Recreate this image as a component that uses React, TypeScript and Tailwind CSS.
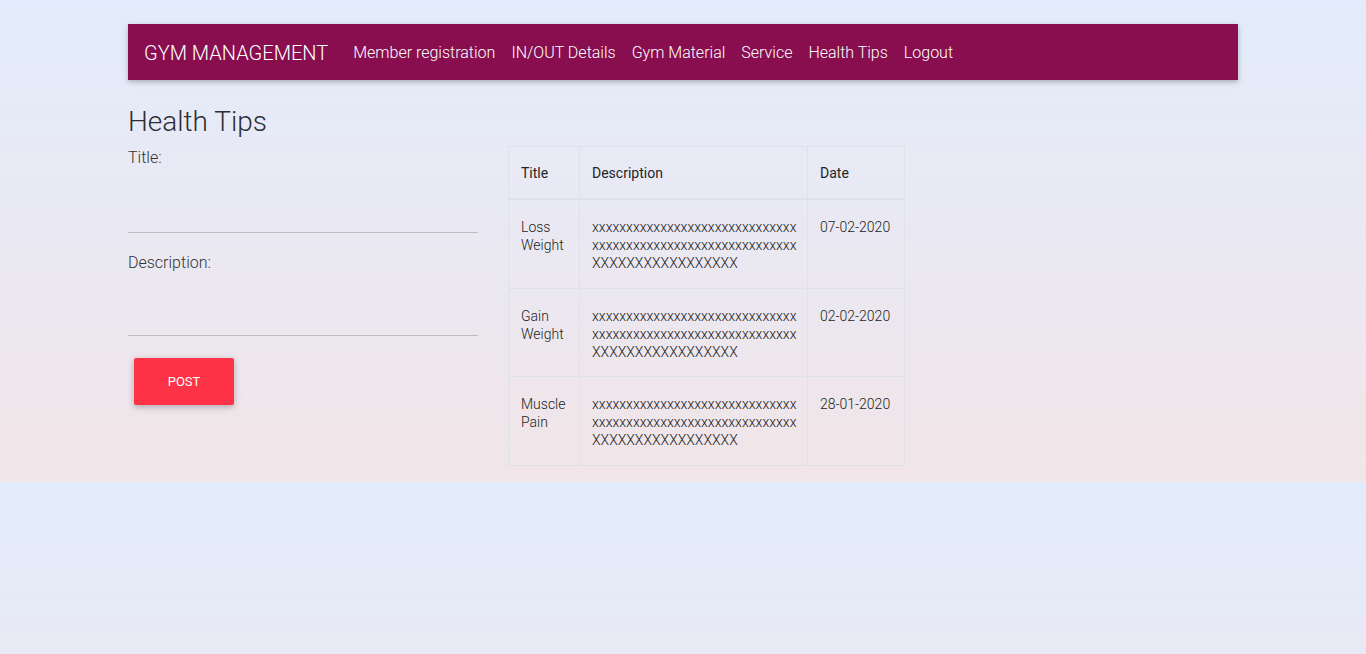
import React from "react";

const links = [
  "Member registration",
  "IN/OUT Details",
  "Gym Material",
  "Service",
  "Health Tips",
  "Logout",
];

const lower = "x".repeat(30);
const upper = "X".repeat(17);

const tips = [
  { title: ["Loss", "Weight"], date: "07-02-2020" },
  { title: ["Gain", "Weight"], date: "02-02-2020" },
  { title: ["Muscle", "Pain"], date: "28-01-2020" },
];

const Navbar = () => (
  <nav className="h-14 bg-[#880e4f] flex items-center px-4 pt-[2px] shadow-[0_2px_4px_rgba(0,0,0,0.16),0_2px_8px_rgba(0,0,0,0.12)]">
    <span className="text-[20px] font-light text-white mr-[17px]">GYM MANAGEMENT</span>
    <ul className="flex items-center">
      {links.map((item) => (
        <li key={item} className="px-2 text-[16px] font-light text-white">
          {item}
        </li>
      ))}
    </ul>
  </nav>
);

const Form = () => (
  <div className="w-[350px]">
    {/* Title */}
    <label className="block text-[16px] leading-6 font-light text-[#333]">Title:</label>
    <div className="h-[63px] border-b border-[#bdbdbd]" />
    {/* Description */}
    <label className="block mt-[18px] text-[16px] leading-6 font-light text-[#333]">
      Description:
    </label>
    <div className="h-[61px] border-b border-[#bdbdbd]" />
    {/* Action */}
    <button className="mt-[22px] ml-[6px] w-[100px] h-[47px] rounded-[2px] bg-[#ff3347] text-white text-[13px] uppercase shadow-[0_2px_5px_rgba(0,0,0,0.16),0_2px_10px_rgba(0,0,0,0.12)]">
      Post
    </button>
  </div>
);

const TipsTable = () => (
  <table className="w-[397px] shrink-0 border-collapse table-fixed text-[14px] leading-[18px]">
    <colgroup>
      <col className="w-[71px]" />
      <col className="w-[228px]" />
      <col />
    </colgroup>
    <thead>
      <tr className="border-b-2 border-[#dee2e6]">
        <th className="border border-[#dee2e6] px-3 pt-[17px] pb-[16px] text-left font-normal text-[#212529]">Title</th>
        <th className="border border-[#dee2e6] px-3 pt-[17px] pb-[16px] text-left font-normal text-[#212529]">Description</th>
        <th className="border border-[#dee2e6] px-3 pt-[17px] pb-[16px] text-left font-normal text-[#212529]">Date</th>
      </tr>
    </thead>
    <tbody>
      {tips.map((row) => (
        <tr key={row.date}>
          <td className="border border-[#dee2e6] px-3 pt-[18px] pb-[15.5px] align-top font-light text-[#222]">
            {row.title[0]}
            <br />
            {row.title[1]}
          </td>
          <td className="border border-[#dee2e6] px-3 pt-[18px] pb-[15.5px] align-top font-light text-[#222] whitespace-nowrap overflow-hidden">
            {lower}
            <br />
            {lower}
            <br />
            {upper}
          </td>
          <td className="border border-[#dee2e6] px-3 pt-[18px] pb-[15.5px] align-top font-light text-[#222]">
            {row.date}
          </td>
        </tr>
      ))}
    </tbody>
  </table>
);

export default function App() {
  return (
    <div className="min-h-screen font-['Roboto',sans-serif] bg-[linear-gradient(to_bottom,#e3ecfc,#f1e5e8)] bg-[length:100%_482px]">
      <div className="w-[1110px] mx-auto pt-6 pb-[17px]">
        <Navbar />
        {/* Heading */}
        <h4 className="mt-[25px] text-[28px] leading-[34px] font-light text-[#2d2d35]">Health Tips</h4>
        <div className="flex gap-[30px] mt-[7px]">
          <Form />
          <TipsTable />
        </div>
      </div>
    </div>
  );
}
